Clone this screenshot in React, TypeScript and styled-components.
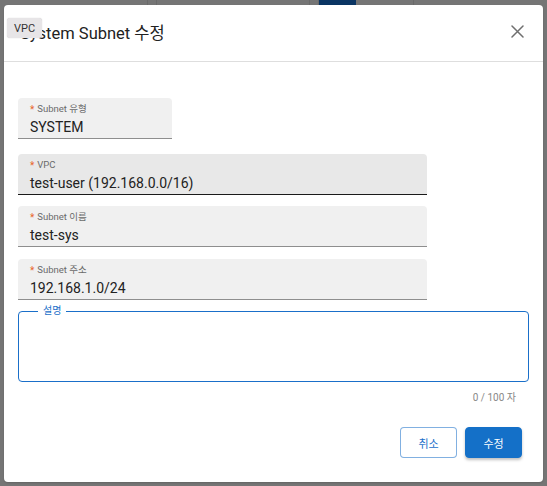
import React from "react";
import styled, { createGlobalStyle } from "styled-components";

const Global = createGlobalStyle`
  html, body { margin: 0; padding: 0; }
  body {
    width: 547px;
    height: 486px;
    overflow: hidden;
    background: #757575;
    font-family: Roboto, "Noto Sans CJK KR", "Noto Sans", sans-serif;
  }
`;

const Page = styled.div`
  width: 547px;
  height: 486px;
  background: #757575;
  display: flex;
  flex-direction: column;
`;

const TopStrip = styled.div`
  height: 5px;
  display: flex;
`;

const StripCell = styled.div<{ $w: number; $dark?: boolean }>`
  width: ${(p) => p.$w}px;
  flex: none;
  border-right: 1px solid ${(p) => (p.$dark ? "#0a3563" : "#6a6a6a")};
  background: ${(p) => (p.$dark ? "#0a3563" : "transparent")};
`;

const Dialog = styled.div`
  position: relative;
  margin-left: 4px;
  width: 539px;
  height: 477px;
  background: #fff;
  border-radius: 4px;
  box-shadow: 0 1px 2px rgba(0, 0, 0, 0.15);
  display: flex;
  flex-direction: column;
`;

const Header = styled.div`
  display: flex;
  align-items: center;
  justify-content: space-between;
  padding: 0 16px 0 16px;
  border-bottom: 1px solid #dedede;
  box-sizing: border-box;
  height: 57px;
`;

const Title = styled.h2`
  margin: -2px 0 0 0;
  font-size: 16.5px;
  font-weight: 400;
  color: #222;
  letter-spacing: 0;
`;

const CloseButton = styled.button`
  width: 20px;
  height: 20px;
  padding: 0;
  margin-top: -4px;
  border: none;
  background: transparent;
  display: flex;
  align-items: center;
  justify-content: center;
  cursor: pointer;
`;

const Tooltip = styled.div`
  position: absolute;
  left: 3px;
  top: 13px;
  width: 35px;
  height: 20px;
  border-radius: 3px;
  background: #e7e5e7;
  box-shadow: 0 0 1px rgba(0, 0, 0, 0.25);
  color: #333;
  font-size: 11px;
  display: flex;
  align-items: center;
  justify-content: center;
`;

const Body = styled.div`
  padding: 36px 14px 0 14px;
  display: flex;
  flex-direction: column;
`;

const Field = styled.div<{ $width: number; $hover?: boolean; $mt: number }>`
  width: ${(p) => p.$width}px;
  margin-top: ${(p) => p.$mt}px;
  background: ${(p) => (p.$hover ? "#e8e8e8" : "#f0f0f0")};
  border-radius: 4px 4px 0 0;
  border-bottom: 1px solid ${(p) => (p.$hover ? "#1a1a1a" : "#8e8e8e")};
  padding: 0 12px;
  box-sizing: border-box;
  height: 41px;
  display: flex;
  flex-direction: column;
`;

const Label = styled.div`
  margin-top: 5px;
  height: 12px;
  font-size: 9.5px;
  line-height: 12px;
  color: #6a6a6a;
  display: flex;
  align-items: center;
  gap: 3px;
`;

const Star = styled.span`
  color: #e8652a;
  font-size: 10px;
  line-height: 10px;
  margin-top: 1px;
`;

const Value = styled.div`
  margin-top: 3px;
  font-size: 14px;
  line-height: 18px;
  color: #222;
`;

const Fieldset = styled.fieldset`
  margin: 6px 0 0 0;
  width: 511px;
  height: 76px;
  box-sizing: border-box;
  border: 1.5px solid #1a6fc9;
  border-radius: 4px;
  padding: 0 12px;
`;

const Legend = styled.legend`
  margin-left: 7px;
  padding: 0 5px;
  font-size: 10px;
  line-height: 10px;
  color: #1a6fc9;
`;

const Counter = styled.div`
  width: 498px;
  margin-top: 7px;
  text-align: right;
  font-size: 10px;
  color: #888;
`;

const Actions = styled.div`
  display: flex;
  justify-content: flex-end;
  gap: 8px;
  padding-right: 21px;
  margin-top: 23px;
`;

const Button = styled.button<{ $primary?: boolean }>`
  width: 57px;
  height: 31px;
  box-sizing: border-box;
  border-radius: 4px;
  font-family: inherit;
  font-size: 11px;
  cursor: pointer;
  border: 1px solid ${(p) => (p.$primary ? "#1470c8" : "rgba(26,111,201,0.55)")};
  background: ${(p) => (p.$primary ? "#1470c8" : "#fff")};
  color: ${(p) => (p.$primary ? "#fff" : "#1a6fc9")};
  box-shadow: ${(p) => (p.$primary ? "0 2px 3px rgba(0,0,0,0.25)" : "none")};
`;

export default function App() {
  return (
    <>
      <Global />
      <Page>
        <TopStrip>
          <StripCell $w={147} />
          <StripCell $w={8} />
          <StripCell $w={152} />
          <StripCell $w={8} />
          <StripCell $w={36} $dark />
          <StripCell $w={57} />
        </TopStrip>
        <Dialog>
          <Header>
            <Title>System Subnet 수정</Title>
            <CloseButton aria-label="close">
              <svg width="13" height="13" viewBox="0 0 13 13">
                <path d="M1 1 L12 12 M12 1 L1 12" stroke="#6f6f6f" strokeWidth="1.5" strokeLinecap="round" />
              </svg>
            </CloseButton>
          </Header>
          <Tooltip>VPC</Tooltip>
          <Body>
            <Field $width={154} $mt={0}>
              <Label>
                <Star>*</Star>Subnet 유형
              </Label>
              <Value>SYSTEM</Value>
            </Field>
            <Field $width={409} $mt={15} $hover>
              <Label>
                <Star>*</Star>VPC
              </Label>
              <Value>test-user (192.168.0.0/16)</Value>
            </Field>
            <Field $width={409} $mt={11}>
              <Label>
                <Star>*</Star>Subnet 이름
              </Label>
              <Value>test-sys</Value>
            </Field>
            <Field $width={409} $mt={12}>
              <Label>
                <Star>*</Star>Subnet 주소
              </Label>
              <Value>192.168.1.0/24</Value>
            </Field>
            <Fieldset>
              <Legend>설명</Legend>
            </Fieldset>
            <Counter>0 / 100 자</Counter>
          </Body>
          <Actions>
            <Button>취소</Button>
            <Button $primary>수정</Button>
          </Actions>
        </Dialog>
      </Page>
    </>
  );
}
